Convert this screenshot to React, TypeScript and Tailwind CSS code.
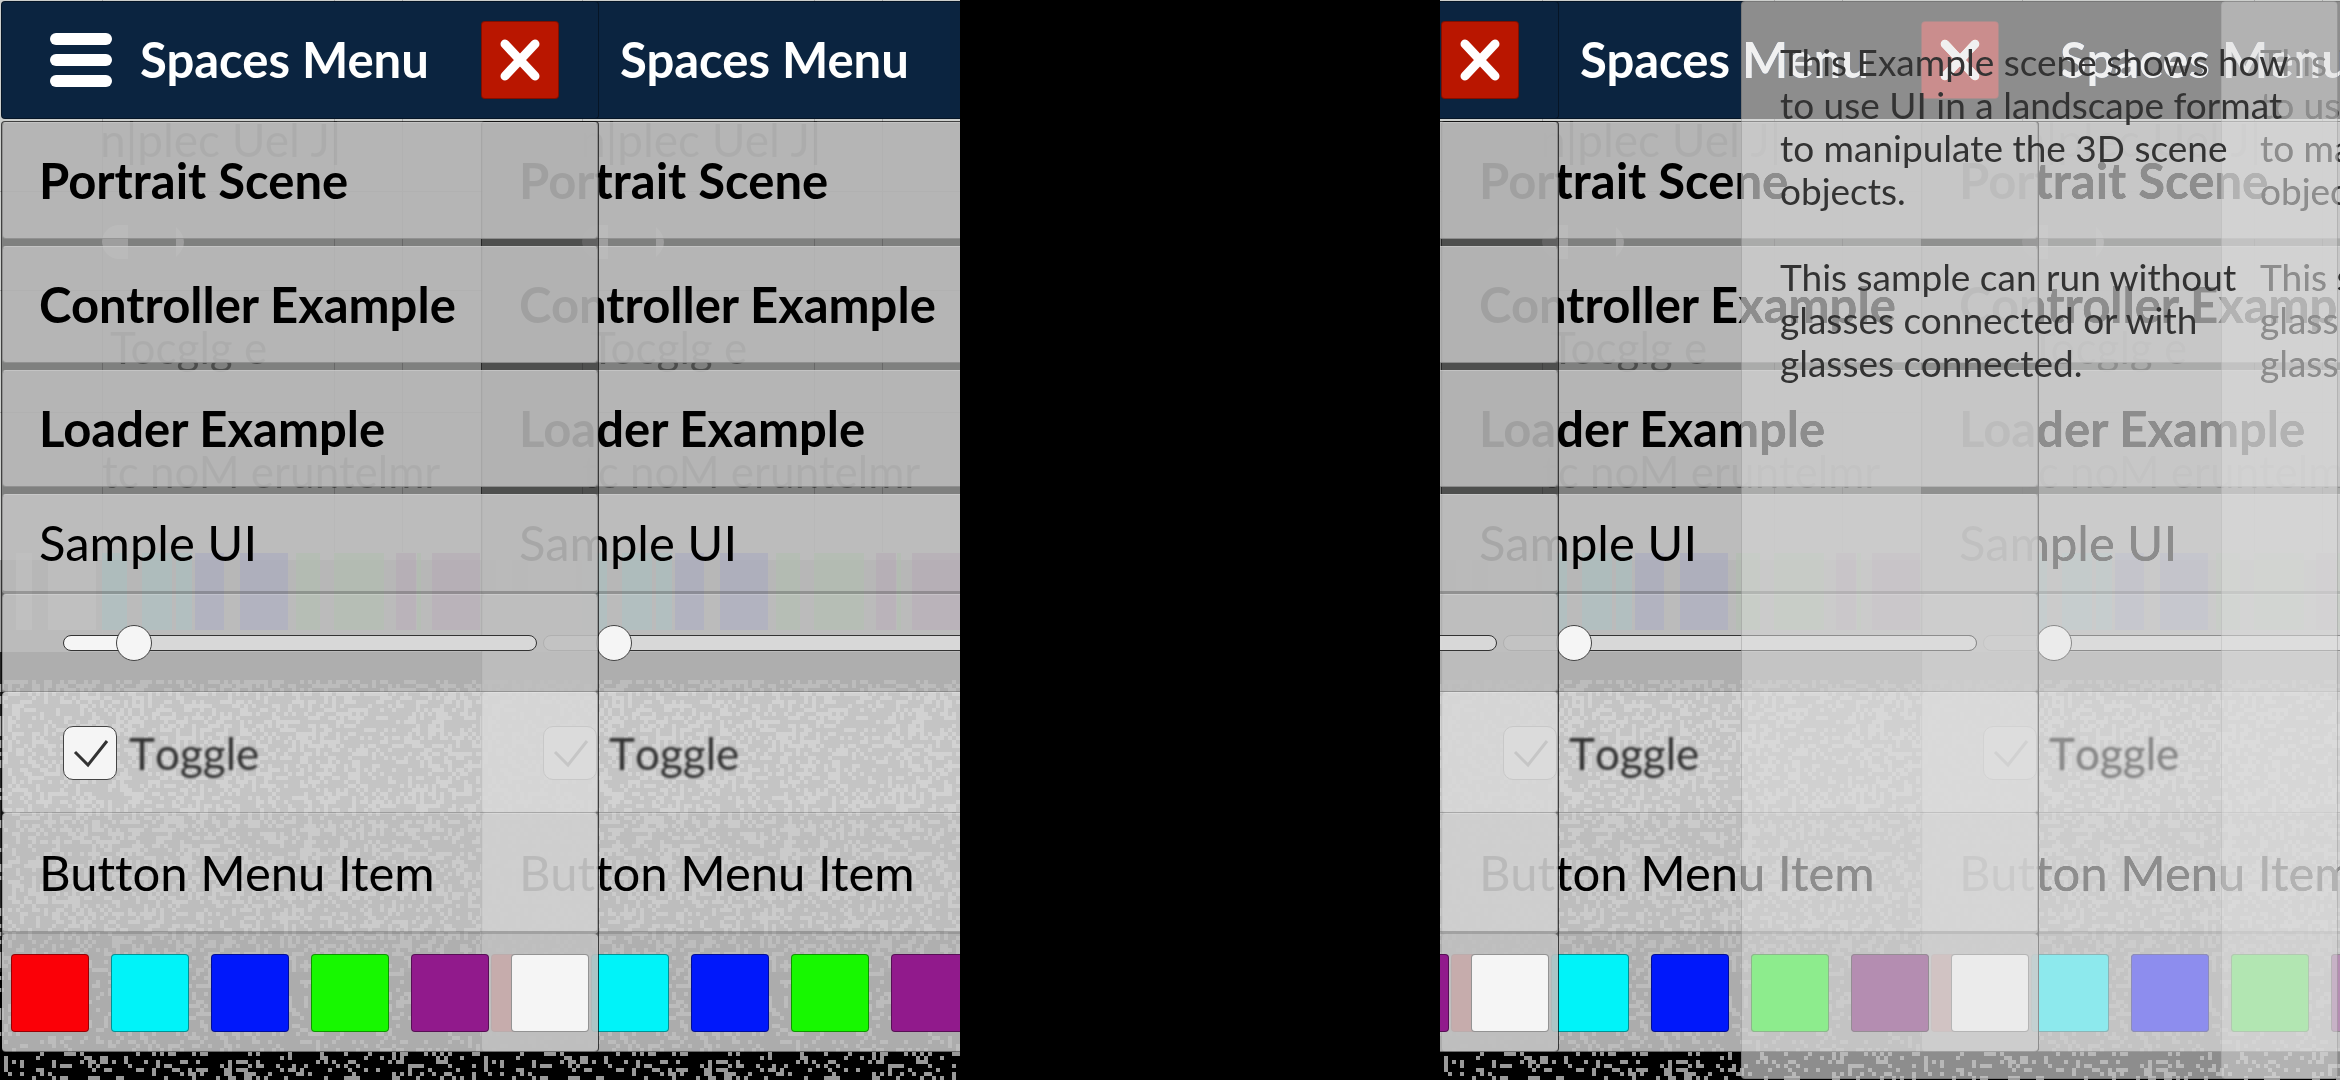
import { useId, useState } from 'react';

const SWATCHES = [
  { name: 'Red', color: 'bg-[#fb0007]' },
  { name: 'Cyan', color: 'bg-[#00f3f9]' },
  { name: 'Blue', color: 'bg-[#0018fb]' },
  { name: 'Green', color: 'bg-[#17f800]' },
  { name: 'Purple', color: 'bg-[#911a8c]' },
  { name: 'White', color: 'bg-[#f5f5f5]' },
];

const SCENES = ['Portrait Scene', 'Controller Example', 'Loader Example'];

const STACK = ['z-30', 'z-20', 'z-10'];

const TRAILS = [
  { x: 102, w: 25, color: '#00f3f9' },
  { x: 142, w: 30, color: '#00f3f9' },
  { x: 176, w: 16, color: '#00f3f9' },
  { x: 195, w: 29, color: '#0018fb' },
  { x: 240, w: 48, color: '#0018fb' },
  { x: 296, w: 24, color: '#50e040' },
  { x: 334, w: 50, color: '#50e040' },
  { x: 396, w: 20, color: '#911a8c' },
  { x: 417, w: 4, color: '#50e040' },
  { x: 432, w: 48, color: '#911a8c' },
];

// 4px static cells, same seed so every tile is identical
function buildStatic(from: number, to: number, density: number) {
  let seed = 20977 + from;
  const next = () => {
    seed = (seed + 0x6d2b79f5) | 0;
    let t = Math.imul(seed ^ (seed >>> 15), 1 | seed);
    t = (t + Math.imul(t ^ (t >>> 7), 61 | t)) ^ t;
    return ((t ^ (t >>> 14)) >>> 0) / 4294967296;
  };
  let path = '';
  for (let y = from; y < to; y += 4) {
    for (let x = 0; x < 480; x += 4) {
      if (next() < density) path += `M${x} ${y}h4v4h-4z`;
    }
  }
  return path;
}

const STATIC_DENSE = buildStatic(680, 972, 0.4);
const STATIC_SPARSE = buildStatic(972, 1080, 0.22);

function BackdropTile() {
  return (
    <svg width="480" height="1080" viewBox="0 0 480 1080" className="block shrink-0" aria-hidden="true">
      <rect width="480" height="1080" fill="#cdcfcd" />
      <rect y="560" width="480" height="92" fill="#a0a0a0" />
      <rect y="652" width="480" height="320" fill="#262626" />
      <rect y="972" width="480" height="108" fill="#000" />
      <g fill="#a8a8a8">
        <rect x="102" width="1" height="652" />
        <rect x="334" width="1" height="552" />
        <rect x="402" width="1" height="552" />
        <rect y="191" width="480" height="1" />
        <rect y="290" width="480" height="1" />
        <rect y="412" width="480" height="1" />
      </g>
      <path d="M128 225h-9a17 17 0 0 0 0 34h9z" fill="#fff" />
      <path d="M176 227q16 15 0 30z" fill="#fff" />
      <g fill="#000" fillOpacity="0.4" fontFamily="Lato, sans-serif" fontSize="46">
        <text x="100" y="157">n|plec Uel  J|</text>
        <text x="110" y="364" fontSize="44">Tocglg  e</text>
        <text x="102" y="488" fontSize="44">tc noM eruntelmr</text>
      </g>
      <g fillOpacity="0.55">
        <rect x="16" y="553" width="16" height="77" fill="#fff" />
        <rect x="48" y="553" width="48" height="77" fill="#fff" />
        {TRAILS.map((t) => (
          <rect key={t.x} x={t.x} y="553" width={t.w} height="77" fill={t.color} />
        ))}
      </g>
      <path d={STATIC_DENSE} fill="#a8a8a8" shapeRendering="crispEdges" />
      <path d={STATIC_SPARSE} fill="#999" shapeRendering="crispEdges" />
    </svg>
  );
}

function Backdrop() {
  return (
    <div className="absolute inset-0 flex overflow-hidden">
      <BackdropTile />
      <BackdropTile />
    </div>
  );
}

function SpacesMenu({ stack }: { stack: string }) {
  const id = useId();
  const [level, setLevel] = useState(12);
  const [checked, setChecked] = useState(true);

  const row = 'flex w-full items-center rounded border border-black/20 border-t-white/20 px-9 text-left';

  return (
    <section className={`relative -mr-[119px] w-[599px] shrink-0 pl-px pt-px text-[49px] text-black ${stack}`}>
      <header className="flex h-[118px] items-center rounded border border-black/40 bg-[#0b2440] pl-12 pr-[39px]">
        <button aria-label="Open menu" className="flex w-[62px] flex-col gap-[9px]">
          <span className="h-3 rounded-full bg-white" />
          <span className="h-3 rounded-full bg-white" />
          <span className="h-3 rounded-full bg-white" />
        </button>
        <h1 className="ml-7 flex-1 whitespace-nowrap font-bold text-white">Spaces Menu</h1>
        <button
          aria-label="Close menu"
          className="flex size-[78px] items-center justify-center rounded border border-black/30 bg-[#b91600]"
        >
          <svg width="44" height="44" viewBox="0 0 44 44" stroke="#fff" strokeWidth="9" strokeLinecap="round">
            <path d="M7 6L37 38M37 6L7 38" />
          </svg>
        </button>
      </header>

      <div className="mt-[2px] rounded border-x border-t border-black/50 bg-black/[0.38]">
        <div className="flex flex-col gap-[7px] pb-[7px]">
          {SCENES.map((name) => (
            <button key={name} className={`${row} h-[117px] bg-[rgba(191,191,191,0.836)] font-bold`}>
              {name}
            </button>
          ))}
        </div>
        <div className={`${row} h-[100px] border-b-[3px] bg-[rgba(200,200,200,0.835)]`}>
          <label htmlFor={`${id}-level`}>Sample UI</label>
        </div>
        <div className={`${row} h-[98px] bg-[rgba(204,204,204,0.84)]`}>
          <input
            id={`${id}-level`}
            type="range"
            min={0}
            max={100}
            value={level}
            onChange={(e) => setLevel(Number(e.target.value))}
            style={{ '--level': `${level + 2}%` } as React.CSSProperties}
            className="mx-6 h-9 w-full appearance-none bg-transparent [&::-webkit-slider-runnable-track]:h-4 [&::-webkit-slider-runnable-track]:rounded-full [&::-webkit-slider-runnable-track]:border [&::-webkit-slider-runnable-track]:border-[#333] [&::-webkit-slider-runnable-track]:bg-[linear-gradient(to_right,#f5f5f5_var(--level),#d8d8d8_var(--level))] [&::-webkit-slider-thumb]:-mt-[11px] [&::-webkit-slider-thumb]:size-9 [&::-webkit-slider-thumb]:appearance-none [&::-webkit-slider-thumb]:rounded-full [&::-webkit-slider-thumb]:border [&::-webkit-slider-thumb]:border-[#444] [&::-webkit-slider-thumb]:bg-[#f5f5f5]"
          />
        </div>
        <div className={`${row} h-[121px] bg-[rgba(232,232,232,0.83)]`}>
          <label className="flex items-center gap-3 pl-6 text-[44px] text-[#333]">
            <span className="relative size-[54px]">
              <input
                type="checkbox"
                checked={checked}
                onChange={(e) => setChecked(e.target.checked)}
                className="block size-full appearance-none rounded-[10px] border border-[#444] bg-[#f5f5f5]"
              />
              {checked && (
                <svg viewBox="0 0 54 54" className="pointer-events-none absolute inset-0" fill="none" stroke="#333" strokeWidth="3">
                  <path d="M12 26L25 39L44 15" />
                </svg>
              )}
            </span>
            <span className="blur-[1px] [font-kerning:none]">Toggle</span>
          </label>
        </div>
        <button className={`${row} h-[121px] border-b-[3px] bg-[rgba(224,224,224,0.83)]`}>Button Menu Item</button>
        <div className="flex h-[118px] items-center gap-[22px] rounded border-b border-black/40 bg-[rgba(207,207,207,0.83)] pl-[9px]">
          {SWATCHES.map((s) => (
            <button key={s.name} aria-label={s.name} className={`size-[78px] shrink-0 rounded border border-black/40 ${s.color}`} />
          ))}
        </div>
      </div>
    </section>
  );
}

// brightness/contrast pull the dark colours behind the glass down to one grey
function InfoPanel({ stack }: { stack: string }) {
  return (
    <aside
      className={`relative -mr-[117px] w-[597px] shrink-0 whitespace-nowrap rounded border border-black/15 bg-[rgba(230,230,230,0.61)] px-[38px] pt-[38px] text-[37px]/[43px] text-[#333] backdrop-brightness-[0.778] backdrop-contrast-[1.8] ${stack}`}
    >
      <p>
        This Example scene shows how
        <br />
        to use UI in a landscape format
        <br />
        to manipulate the 3D scene
        <br />
        objects.
      </p>
      <p className="mt-[43px]">
        This sample can run without
        <br />
        glasses connected or with
        <br />
        glasses connected.
      </p>
    </aside>
  );
}

export default function App() {
  return (
    <main className="grid min-h-screen grid-cols-[16fr_8fr_15fr] bg-black font-['Lato',sans-serif] [font-variant-ligatures:none]">
      <div className="relative isolate min-w-0 overflow-hidden">
        <Backdrop />
        <div className="flex">
          <SpacesMenu stack={STACK[0]} />
          <SpacesMenu stack={STACK[1]} />
        </div>
      </div>

      <div className="bg-black" />

      <div className="relative isolate min-w-0 overflow-hidden">
        <Backdrop />
        <div className="-ml-[480px] flex">
          {STACK.map((z) => (
            <SpacesMenu key={z} stack={z} />
          ))}
        </div>
        <div className="absolute inset-0 z-40 flex py-px pl-[301px]">
          <InfoPanel stack={STACK[0]} />
          <InfoPanel stack={STACK[1]} />
        </div>
      </div>
    </main>
  );
}
